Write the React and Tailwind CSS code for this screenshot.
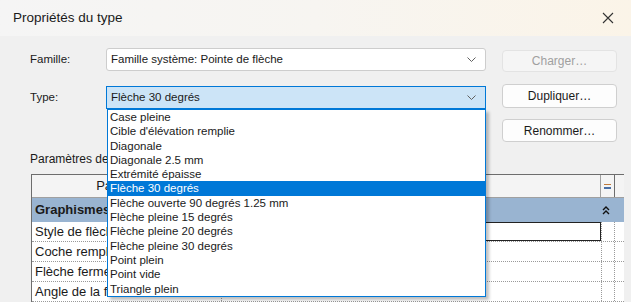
import { useState } from "react";

const TYPES = [
  "Case pleine",
  "Cible d'élévation remplie",
  "Diagonale",
  "Diagonale 2.5 mm",
  "Extrémité épaisse",
  "Flèche 30 degrés",
  "Flèche ouverte 90 degrés 1.25 mm",
  "Flèche pleine 15 degrés",
  "Flèche pleine 20 degrés",
  "Flèche pleine 30 degrés",
  "Point plein",
  "Point vide",
  "Triangle plein",
];

const ROWS = ["Style de flèche", "Coche remplie", "Flèche fermée", "Angle de la flèche"];

function Chevron() {
  return (
    <svg width="9" height="5" viewBox="0 0 9 5" className="shrink-0">
      <path d="M0.5 0.5 L4.5 4.5 L8.5 0.5" fill="none" stroke="#606060" strokeWidth="1" />
    </svg>
  );
}

function Button({ children, disabled, className = "" }) {
  return (
    <div
      className={
        "w-[115px] flex items-center justify-center rounded-[4px] border text-[12px] " +
        (disabled
          ? "bg-[#f5f5f5] border-[#e3e3e3] text-[#a0a0a0] "
          : "bg-[#fdfdfd] border-[#cfcfcf] text-[#1a1a1a] ") +
        className
      }
    >
      {children}
    </div>
  );
}

export default function App() {
  const [selected] = useState("Flèche 30 degrés");

  return (
    <div className="w-[631px] h-[302px] overflow-hidden bg-[#f0f0f0] font-['Liberation_Sans',sans-serif] text-[#1a1a1a]">
      {/* Title bar */}
      <div className="h-[36px] flex items-center justify-between pl-[13px] pr-[17px] bg-gradient-to-r from-[#f5f5f5] via-[#f7f5f1] to-[#fbf4e8]">
        <span className="text-[13.5px]">Propriétés du type</span>
        <svg width="12" height="12" viewBox="0 0 12 12">
          <path d="M1 1 L11 11 M11 1 L1 11" stroke="#333" strokeWidth="1.1" />
        </svg>
      </div>

      {/* Body */}
      <div className="pl-[30px] pt-[12px]">
        {/* Famille */}
        <div className="flex items-start">
          <div className="w-[76px] h-[23px] flex items-center text-[11.5px]">Famille:</div>
          <div className="w-[380px] h-[23px] flex items-center justify-between pl-[4px] pr-[9px] bg-white border border-[#cdcdcd] rounded-[3px] text-[11.5px]">
            <span>Famille système: Pointe de flèche</span>
            <Chevron />
          </div>
          <Button disabled className="ml-[16px] mt-[2px] h-[22px]">Charger…</Button>
        </div>

        {/* Type */}
        <div className="flex items-start mt-[14px]">
          <div className="w-[76px] h-[23px] flex items-center text-[11.5px]">Type:</div>
          <div className="relative w-[380px] h-[23px]">
            <div className="h-full flex items-center justify-between pl-[4px] pr-[9px] bg-[#cce4f7] border border-[#0078d7] text-[11.5px]">
              <span>{selected}</span>
              <Chevron />
            </div>
            {/* Open dropdown list */}
            <div className="absolute left-[1px] top-[23px] w-[379px] h-[188px] bg-white border border-[#0078d7] shadow-[3px_3px_3px_rgba(0,0,0,0.25)] z-10 text-[11.5px]">
              {TYPES.map((t) => (
                <div
                  key={t}
                  className={
                    "h-[14.3px] leading-[14.3px] pl-[2px] whitespace-nowrap " +
                    (t === selected ? "bg-[#0078d7] text-white" : "")
                  }
                >
                  {t}
                </div>
              ))}
            </div>
          </div>
          <Button className="ml-[16px] -mt-[2px] h-[24px]">Dupliquer…</Button>
        </div>

        {/* Renommer */}
        <div className="flex mt-[10px] pl-[472px]">
          <Button className="h-[23px]">Renommer…</Button>
        </div>

        <div className="mt-[10px] h-[14px] leading-[14px] text-[12px]">Paramètres de type</div>

        {/* Parameters table */}
        <div className="mt-[8px] ml-[1px] w-[593px] bg-white border-t border-l border-[#6d6d6d] text-[13px]">
          <div className="flex h-[23px] bg-[#f4f4f4] border-b border-[#a0a0a0]">
            <div className="w-[190px] flex items-center justify-center border-r border-[#a0a0a0]">Paramètre</div>
            <div className="w-[379px] flex items-center justify-center border-r border-[#a0a0a0]">Valeur</div>
            <div className="w-[14px] flex flex-col items-center justify-center gap-[2px] border-r border-[#6d6d6d]">
              <div className="w-[7px] h-[1.5px] bg-[#c07a3a]" />
              <div className="w-[7px] h-[1.5px] bg-[#4a6fa5]" />
            </div>
          </div>
          <div className="flex items-center justify-between h-[24px] bg-[#99b4d1] pl-[3px] pr-[14px]">
            <span className="font-bold">Graphismes</span>
            <svg width="8" height="9" viewBox="0 0 8 9">
              <path d="M1 4 L4 1 L7 4 M1 8 L4 5 L7 8" fill="none" stroke="#111" strokeWidth="1.4" />
            </svg>
          </div>
          {ROWS.map((r, i) => (
            <div key={r} className="flex h-[20px] border-b border-dotted border-[#9a9a9a]">
              <div className="w-[190px] pl-[3px] flex items-center whitespace-nowrap overflow-hidden border-r border-dotted border-[#9a9a9a]">
                {r}
              </div>
              <div className="w-[379px] flex items-center">
                {i === 0 && <div className="w-full h-full border border-[#222]" />}
              </div>
              <div className="w-[14px] border-l border-r border-dotted border-[#9a9a9a]" />
            </div>
          ))}
        </div>
      </div>
    </div>
  );
}
